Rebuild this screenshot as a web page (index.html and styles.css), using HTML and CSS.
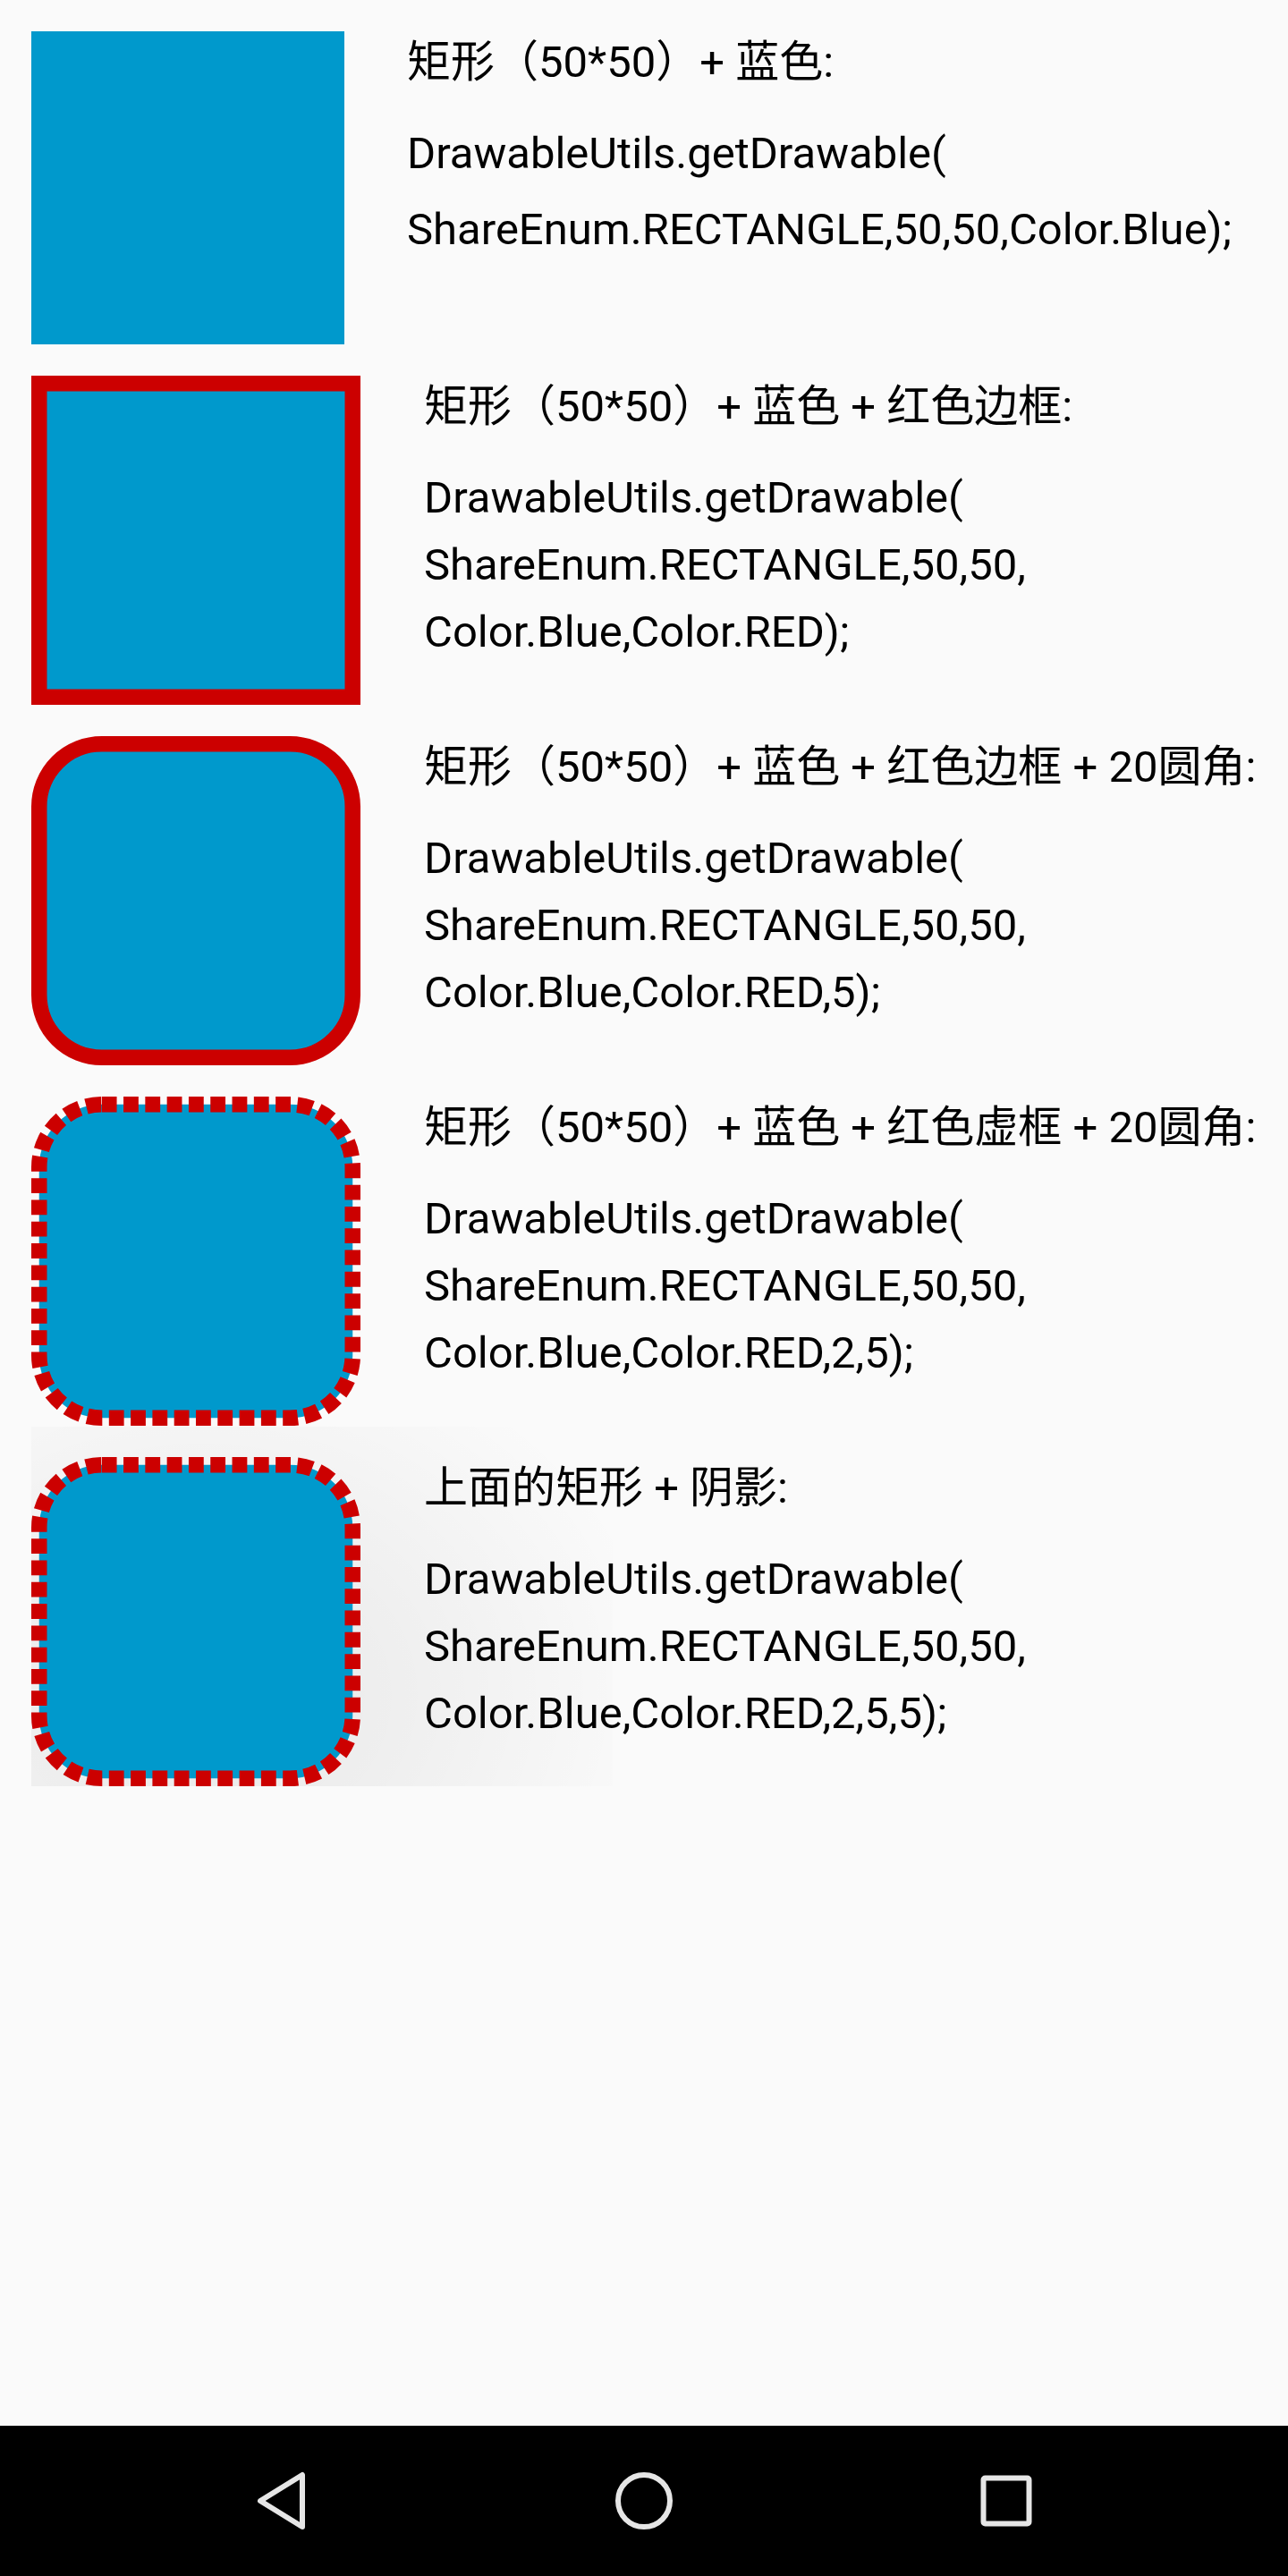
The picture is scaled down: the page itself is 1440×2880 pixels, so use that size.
FILE: index.html
```html
<!DOCTYPE html>
<html lang="zh-CN">
<head>
<meta charset="utf-8">
<title>DrawableUtils</title>
<link rel="stylesheet" href="styles.css">
</head>
<body>
<main class="list">
  <section class="row row-first">
    <div class="shape shape-plain"></div>
    <div class="desc desc-first">
      <p class="title">矩形（50*50）+ 蓝色:</p>
      <p class="code code-wide">DrawableUtils.getDrawable(<br>ShareEnum.RECTANGLE,50,50,Color.Blue);</p>
    </div>
  </section>

  <section class="row">
    <svg class="shape" width="368" height="368" viewBox="0 0 368 368">
      <rect class="fill-stroke" x="8.75" y="8.75" width="350.5" height="350.5"/>
    </svg>
    <div class="desc">
      <p class="title">矩形（50*50）+ 蓝色 + 红色边框:</p>
      <p class="code">DrawableUtils.getDrawable(<br>ShareEnum.RECTANGLE,50,50,<br>Color.Blue,Color.RED);</p>
    </div>
  </section>

  <section class="row">
    <svg class="shape" width="368" height="368" viewBox="0 0 368 368">
      <rect class="fill-stroke" x="8.75" y="8.75" width="350.5" height="350.5" rx="70" ry="70"/>
    </svg>
    <div class="desc">
      <p class="title">矩形（50*50）+ 蓝色 + 红色边框 + 20圆角:</p>
      <p class="code">DrawableUtils.getDrawable(<br>ShareEnum.RECTANGLE,50,50,<br>Color.Blue,Color.RED,5);</p>
    </div>
  </section>

  <section class="row">
    <svg class="shape" width="368" height="368" viewBox="0 0 368 368">
      <rect class="fill-stroke dashed" x="8.75" y="8.75" width="350.5" height="350.5" rx="70" ry="70"/>
    </svg>
    <div class="desc">
      <p class="title">矩形（50*50）+ 蓝色 + 红色虚框 + 20圆角:</p>
      <p class="code">DrawableUtils.getDrawable(<br>ShareEnum.RECTANGLE,50,50,<br>Color.Blue,Color.RED,2,5);</p>
    </div>
  </section>

  <section class="row row-shadow">
    <svg class="shape" width="368" height="368" viewBox="0 0 368 368">
      <rect class="fill-stroke dashed" x="8.75" y="8.75" width="350.5" height="350.5" rx="70" ry="70"/>
    </svg>
    <div class="desc">
      <p class="title">上面的矩形 + 阴影:</p>
      <p class="code">DrawableUtils.getDrawable(<br>ShareEnum.RECTANGLE,50,50,<br>Color.Blue,Color.RED,2,5,5);</p>
    </div>
  </section>
</main>

<nav class="navbar">
  <div class="nav-btn">
    <svg width="72" height="72" viewBox="0 0 72 72"><path class="nav-icon" d="M59 7 V65 L12 36 Z"/></svg>
  </div>
  <div class="nav-btn">
    <svg width="72" height="72" viewBox="0 0 72 72"><circle class="nav-icon" cx="36" cy="36" r="29"/></svg>
  </div>
  <div class="nav-btn">
    <svg width="72" height="72" viewBox="0 0 72 72"><rect class="nav-icon" x="10.5" y="10.5" width="51" height="51" rx="2"/></svg>
  </div>
</nav>
</body>
</html>
```

FILE: styles.css
```css
html, body {
  margin: 0;
  padding: 0;
}

body {
  width: 1440px;
  height: 2880px;
  background: #fafafa;
  display: flex;
  flex-direction: column;
  font-family: Roboto, "Noto Sans CJK SC", sans-serif;
  color: #000;
  overflow: hidden;
}

.list {
  flex: 1;
  display: flex;
  flex-direction: column;
  gap: 35px;
  padding-top: 35px;
}

.row {
  display: flex;
  align-items: flex-start;
  padding-left: 35px;
  position: relative;
}

.shape {
  flex: none;
  display: block;
  position: relative;
  z-index: 1;
}

.shape-plain {
  width: 350px;
  height: 350px;
  background: #0099cc;
}

.fill-stroke {
  fill: #0099cc;
  stroke: #cc0000;
  stroke-width: 17.5;
}

.dashed {
  stroke-dasharray: 16.8 7.5;
}

.desc {
  margin-left: 71px;
  position: relative;
  z-index: 1;
  white-space: nowrap;
}

.desc-first {
  margin-left: 70px;
}

.title {
  margin: 0;
  font-size: 49px;
  line-height: 70px;
}

.code {
  margin: 28.5px 0 0;
  font-size: 49px;
  line-height: 75px;
}

.code-wide {
  margin-top: 23.5px;
  line-height: 85px;
}

.row-shadow::before {
  content: "";
  position: absolute;
  left: 35px;
  top: -34px;
  width: 650px;
  height: 402px;
  z-index: 0;
  background:
    radial-gradient(ellipse 520px 420px at 190px 300px, rgba(0, 0, 0, 0.075) 0%, rgba(0, 0, 0, 0.045) 45%, rgba(0, 0, 0, 0.015) 80%, rgba(0, 0, 0, 0) 100%);
}

.navbar {
  flex: none;
  height: 168px;
  background: #000;
  display: grid;
  grid-template-columns: repeat(3, 405px);
  justify-content: center;
  align-items: center;
}

.nav-btn {
  display: flex;
  justify-content: center;
  align-items: center;
}

.nav-btn svg {
  display: block;
}

.nav-icon {
  fill: none;
  stroke: #e6e6e6;
  stroke-width: 6;
  stroke-linejoin: round;
}
```
